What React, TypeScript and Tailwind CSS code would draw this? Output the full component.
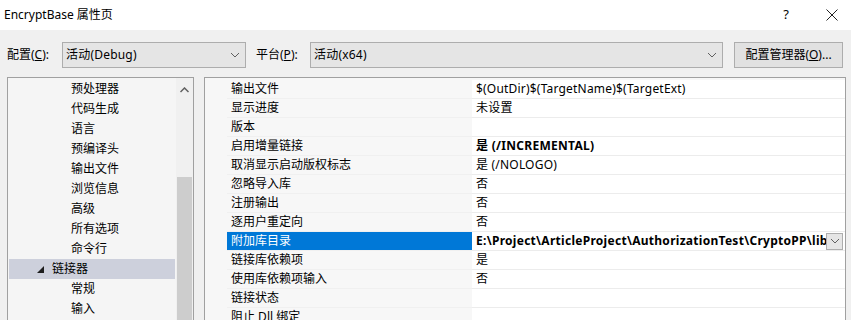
import React from "react";

const FONT = { fontFamily: '"Noto Sans", "Noto Sans CJK SC", sans-serif' };

function Chevron({ className = "" }: { className?: string }) {
  return (
    <svg width="10" height="6" viewBox="0 0 10 6" className={className}>
      <path d="M1 1 L5 5 L9 1" fill="none" stroke="#606060" strokeWidth="1" />
    </svg>
  );
}

const treeItems: { label: string; level: number; selected?: boolean }[] = [
  { label: "预处理器", level: 2 },
  { label: "代码生成", level: 2 },
  { label: "语言", level: 2 },
  { label: "预编译头", level: 2 },
  { label: "输出文件", level: 2 },
  { label: "浏览信息", level: 2 },
  { label: "高级", level: 2 },
  { label: "所有选项", level: 2 },
  { label: "命令行", level: 2 },
  { label: "链接器", level: 1, selected: true },
  { label: "常规", level: 2 },
  { label: "输入", level: 2 },
];

const props: { name: string; value: string; bold?: boolean; selected?: boolean }[] = [
  { name: "输出文件", value: "$(OutDir)$(TargetName)$(TargetExt)" },
  { name: "显示进度", value: "未设置" },
  { name: "版本", value: "" },
  { name: "启用增量链接", value: "是 (/INCREMENTAL)", bold: true },
  { name: "取消显示启动版权标志", value: "是 (/NOLOGO)" },
  { name: "忽略导入库", value: "否" },
  { name: "注册输出", value: "否" },
  { name: "逐用户重定向", value: "否" },
  { name: "附加库目录", value: "E:\\Project\\ArticleProject\\AuthorizationTest\\CryptoPP\\lib", bold: true, selected: true },
  { name: "链接库依赖项", value: "是" },
  { name: "使用库依赖项输入", value: "否" },
  { name: "链接状态", value: "" },
  { name: "阻止 Dll 绑定", value: "" },
];

export default function App() {
  return (
    <div className="w-[851px] h-[320px] overflow-hidden bg-[#f0f0f0] text-[12px] text-black flex flex-col" style={FONT}>
      {/* title bar */}
      <div className="h-[30px] bg-white flex items-center shrink-0">
        <span className="ml-[4px] leading-[16px]">EncryptBase 属性页</span>
        <div className="flex-1" />
        <span className="w-[12px] text-center mr-[34px] text-[13px]">?</span>
        <svg width="12" height="12" viewBox="0 0 12 12" className="mr-[13px]">
          <path d="M0.5 0.5 L11.5 11.5 M11.5 0.5 L0.5 11.5" stroke="#222" strokeWidth="1" />
        </svg>
      </div>

      {/* combo row */}
      <div className="mt-[12px] h-[26px] flex items-center shrink-0">
        <span className="ml-[7px] w-[55px] leading-[16px]">
          配置(<span className="underline">C</span>):
        </span>
        <div className="w-[184px] h-[26px] border border-[#adadad] bg-[#e5e5e5] flex items-center pl-[3px] pr-[5px]">
          <span className="flex-1 leading-[16px] tracking-[0.2px]">活动(Debug)</span>
          <Chevron />
        </div>
        <span className="ml-[10px] w-[54px] leading-[16px]">
          平台(<span className="underline">P</span>):
        </span>
        <div className="w-[413px] h-[26px] border border-[#adadad] bg-[#e5e5e5] flex items-center pl-[3px] pr-[5px]">
          <span className="flex-1 leading-[16px] tracking-[0.2px]">活动(x64)</span>
          <Chevron />
        </div>
        <div className="ml-[11px] w-[109px] h-[26px] border border-[#adadad] bg-[#e1e1e1] flex items-center justify-center leading-[16px]">
          配置管理器(<span className="underline">O</span>)...
        </div>
      </div>

      {/* panels */}
      <div className="mt-[9px] flex flex-1 min-h-0">
        {/* tree */}
        <div className="ml-[7px] w-[187px] border border-[#a0a0a0] border-b-0 bg-[#f5f5f5] flex">
          <div className="flex-1 pt-[1px] flex flex-col">
            {treeItems.map((it) => (
              <div
                key={it.label}
                className={`h-[20px] flex items-center shrink-0 ml-[1px] mr-[1px] ${it.selected ? "bg-[#cdd0dc]" : ""}`}
              >
                {it.level === 1 ? (
                  <>
                    <svg width="7" height="7" viewBox="0 0 7 7" className="ml-[28px]">
                      <path d="M7 0 L7 7 L0 7 Z" fill="#1e1e1e" />
                    </svg>
                    <span className="ml-[8px] leading-[16px]">{it.label}</span>
                  </>
                ) : (
                  <span className="ml-[62px] leading-[16px]">{it.label}</span>
                )}
              </div>
            ))}
          </div>
          <div className="w-[17px] bg-[#f0f0f0] flex flex-col shrink-0">
            <div className="h-[17px] flex items-center justify-center mt-[3px]">
              <svg width="9" height="6" viewBox="0 0 9 6">
                <path d="M0.5 5 L4.5 1 L8.5 5" fill="none" stroke="#606060" strokeWidth="1.5" />
              </svg>
            </div>
            <div className="mt-[79px] flex-1 mx-[1px] bg-[#cdcdcd]" />
          </div>
        </div>

        {/* property grid */}
        <div className="ml-[10px] w-[642px] border border-[#a0a0a0] border-b-0 bg-[#f7f7f7] pt-[2px] flex flex-col">
          {props.map((p) => (
            <div key={p.name} className="h-[19px] flex shrink-0">
              <div className="w-[22px] shrink-0" />
              <div
                className={`w-[245px] shrink-0 flex items-center pl-[4px] border-b border-[#f0f0f0] ${
                  p.selected ? "bg-[#0078d7] text-white" : ""
                }`}
              >
                <span className="leading-[16px] whitespace-nowrap">{p.name}</span>
              </div>
              <div className="flex-1 flex items-center pl-[4px] border-b border-[#ececec] bg-white overflow-hidden">
                <span
                  className={`leading-[16px] whitespace-nowrap flex-1 overflow-hidden ${
                    p.bold ? "font-bold tracking-[0.28px]" : "tracking-[0.2px]"
                  }`}
                >
                  {p.value}
                </span>
                {p.selected && (
                  <div className="w-[17px] h-[17px] border border-[#adadad] bg-[#e5e5e5] flex items-center justify-center shrink-0 mr-[2px]">
                    <Chevron />
                  </div>
                )}
              </div>
            </div>
          ))}
        </div>
      </div>
    </div>
  );
}
